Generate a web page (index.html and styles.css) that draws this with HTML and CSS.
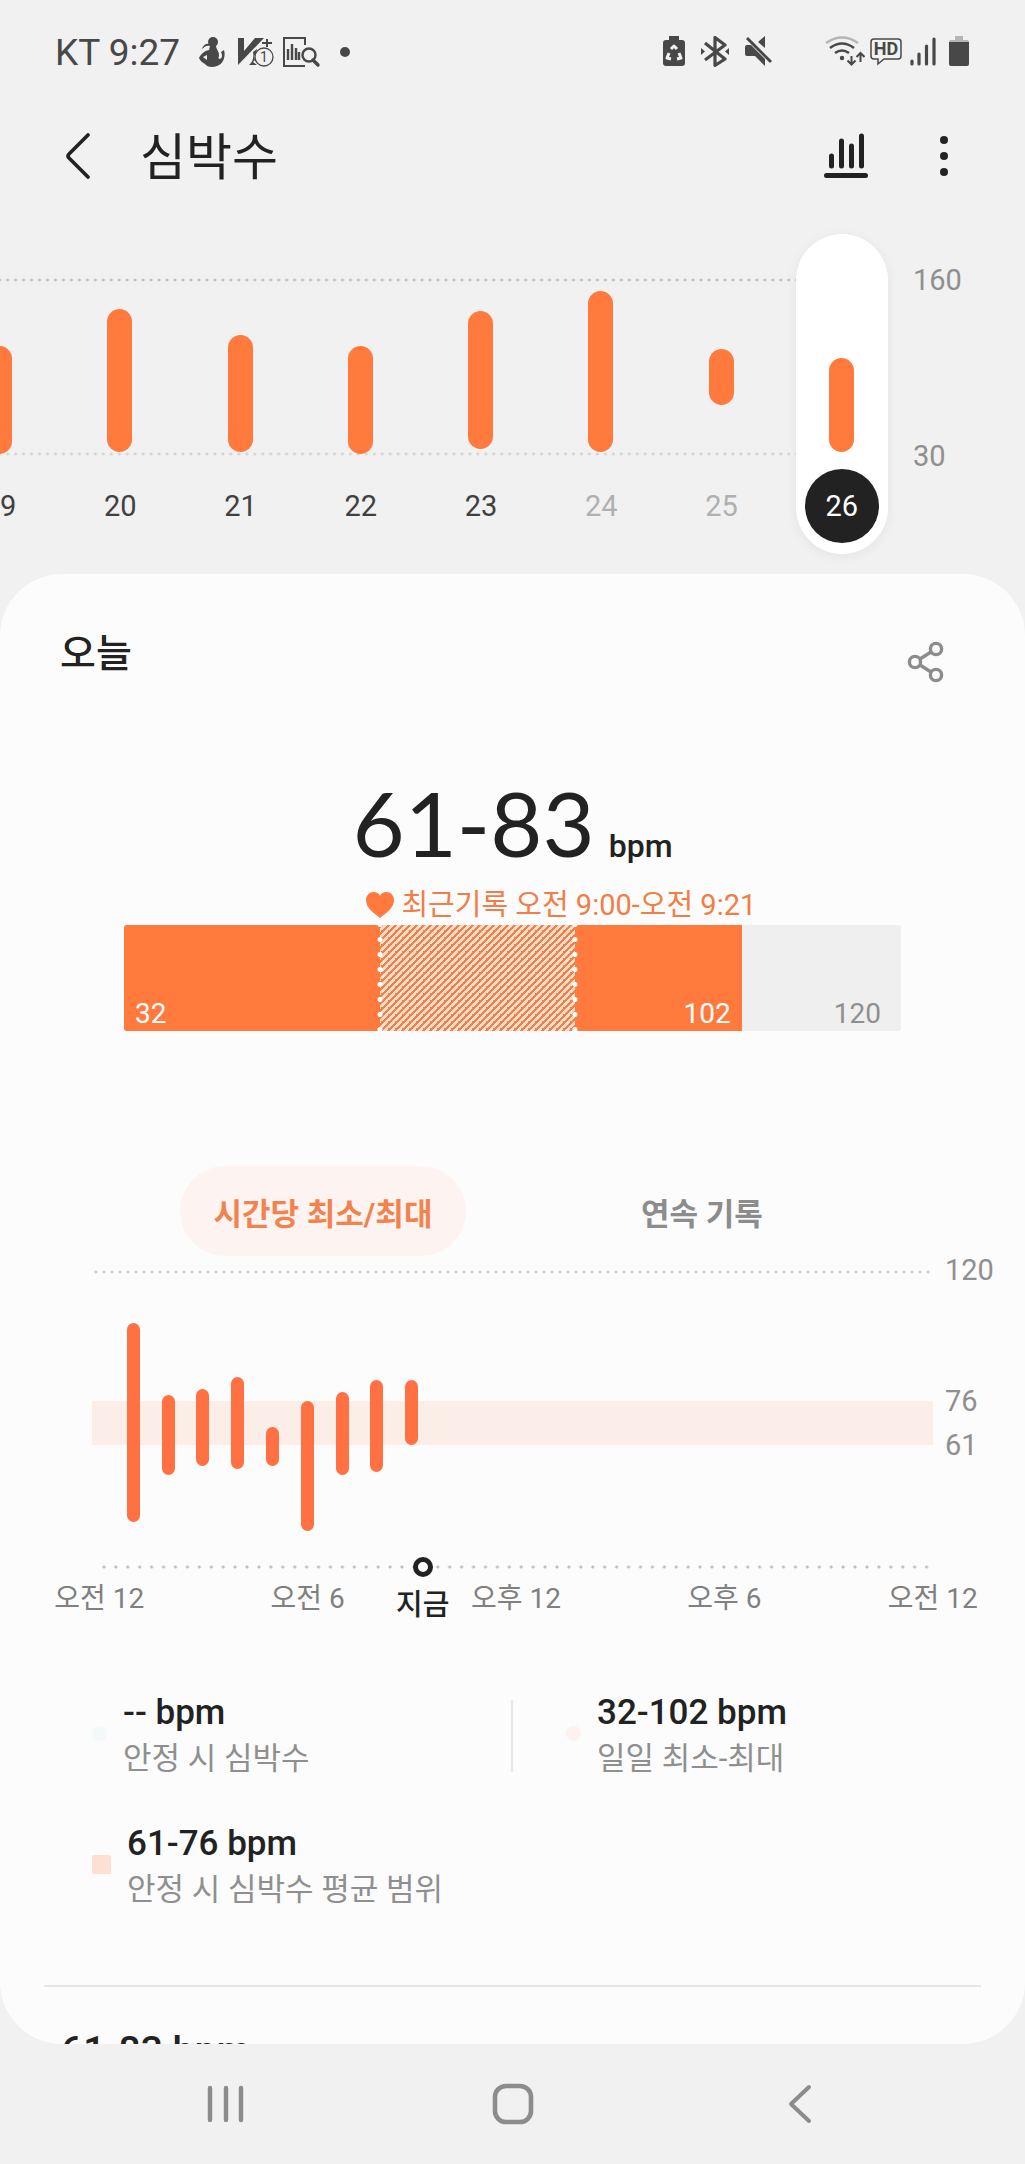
FILE: index.html
```html
<!DOCTYPE html>
<html lang="ko">
  <head>
    <meta charset="utf-8" />
    <title>심박수</title>
    <meta name="viewport" content="width=device-width, initial-scale=1.0" />
    <link rel="stylesheet" href="styles.css">
  </head>
  <body>
    <div class="statusbar">
      <span class="clock">KT 9:27</span>
      <div class="notices">
        <svg width="36" height="32" viewBox="0 0 36 32" fill="#484848">
          <circle cx="19" cy="6" r="5" />
          <path d="M8 13c1-4 4-6 8-5l1 2c-4-1-6 0-9 3z" />
          <path d="M16 10h6c0 3 3 5 3 9 0 2-1 3 0 4 3 0 4-3 2-7l3-2c2 7-1 14-7 16-5 2-10 1-12-2-2-1-5-3-6-6 2-4 5-7 10-8zM9 21l4 3v-5z" fill-rule="evenodd" />
        </svg>
        <svg width="40" height="32" viewBox="0 0 40 32">
          <path d="M2 2h6v13L19 2h9L2 29z" fill="#484848" />
          <path d="M17 16l4-3-1 5-2 2 1 4-2 2 4 3h-8c4-3 5-8 4-13z" fill="#484848" />
          <path d="M26 7h10M31 3v8" stroke="#484848" stroke-width="2" />
          <circle cx="28" cy="21" r="9" fill="#f1f1f1" stroke="#484848" stroke-width="1.3" />
          <text class="badge-number" x="28" y="26" text-anchor="middle">1</text>
        </svg>
        <svg width="40" height="32" viewBox="0 0 40 32" fill="none" stroke="#484848" stroke-width="2">
          <path d="M23 9V2H2v28h21" />
          <path d="M6 24V13M10 24V8M14 24V12M17 24v-8" stroke-width="2.4" />
          <circle cx="27" cy="19" r="6.5" stroke-width="2.4" />
          <path d="M31 24l5 5" stroke-width="3.4" stroke-linecap="round" />
        </svg>
        <span class="more-dot"></span>
      </div>
      <div class="phone-state">
        <svg width="22" height="32" viewBox="0 0 22 32">
          <path d="M6 0h10v4h3q3 0 3 3v20q0 3-3 3H3q-3 0-3-3V7q0-3 3-3h3z" fill="#484848" />
          <path d="M8 13l3-3 3 3M6 17l-2 5 4 1M16 17l2 5-4 1" stroke="#f1f1f1" stroke-width="3" fill="none" stroke-linejoin="round" />
        </svg>
        <svg width="28" height="32" viewBox="0 0 28 32" fill="none" stroke="#484848" stroke-width="3.2">
          <path d="M4 7l20 16-10 6.500V1.500L24 9 4 24" stroke-linejoin="round" />
          <path d="M0 12l4 3.500-4 3.500zM28 12l-4 3.500 4 3.500z" fill="#484848" stroke="none" />
        </svg>
        <svg width="28" height="32" viewBox="0 0 28 32">
          <path d="M0 11q0-2 2-2h4l14 14v7L10 20H2q-2 0-2-2zM13 6l7-6v12z" fill="#484848" />
          <path d="M2 2l24 24" stroke="#484848" stroke-width="3" />
        </svg>
      </div>
      <div class="network">
        <svg width="40" height="32" viewBox="0 0 40 32" fill="none" stroke="#484848" stroke-width="2.6">
          <path d="M1 7q16-11 32 0" stroke="#b5b5b5" />
          <path d="M5 12q12-9 24 0M10 17q7-5 14 0" />
          <circle cx="17" cy="22" r="2.200" fill="#484848" stroke="none" />
          <path d="M26.500 20v8M22.500 24.500l4 4 4-4M35.500 26v-9M31.500 21l4-4 4 4" stroke-width="2" />
        </svg>
        <svg width="36" height="32" viewBox="0 0 36 32">
          <path d="M5 3h24q3 0 3 3v14q0 3-3 3H15l-6 5v-5H5q-3 0-3-3V6q0-3 3-3z" fill="none" stroke="#484848" stroke-width="1.500" />
          <text class="hd-text" x="17" y="19" text-anchor="middle">HD</text>
        </svg>
        <svg width="36" height="32" viewBox="0 0 36 32" stroke="#484848" stroke-width="3.200" stroke-linecap="round">
          <path d="M3 25v3M10 18v10M17.500 10v18M25 3v25" />
        </svg>
        <svg width="20" height="32" viewBox="0 0 20 32">
          <path d="M0 8V6q0-2 2-2h4V0h8v4h4q2 0 2 2v2z" fill="#b5b5b5" />
          <path d="M0 6h20v22q0 2-2 2H2q-2 0-2-2z" fill="#484848" />
        </svg>
      </div>
    </div>

    <header class="topbar">
      <button class="icon-button" type="button" aria-label="뒤로">
        <svg width="26" height="48" viewBox="0 0 26 48" fill="none" stroke="#222" stroke-width="3.600" stroke-linecap="round" stroke-linejoin="round">
          <path d="M23 3L4 22q-2 2 0 4l19 19" />
        </svg>
      </button>
      <h1>심박수</h1>
      <button class="icon-button trend" type="button" aria-label="추세">
        <svg width="46" height="48" viewBox="0 0 46 48" stroke="#222" stroke-width="5" stroke-linecap="round">
          <path d="M8.500 24v10M18.500 9v25M28.500 14v20M38.500 4v30M3.500 43.500h39" />
        </svg>
      </button>
      <button class="icon-button" type="button" aria-label="더보기">
        <svg width="10" height="48" viewBox="0 0 10 48" fill="#222">
          <circle cx="5" cy="8" r="4" />
          <circle cx="5" cy="24" r="4" />
          <circle cx="5" cy="40" r="4" />
        </svg>
      </button>
    </header>

    <section class="week">
      <div class="week-plot">
        <div class="week-lines"></div>
        <div class="days">
          <button class="day" type="button"><span class="day-plot"><span class="day-bar" style="top: 38%; height: 62%"></span></span><span class="day-name">19</span></button>
          <button class="day" type="button"><span class="day-plot"><span class="day-bar" style="top: 17%; height: 82%"></span></span><span class="day-name">20</span></button>
          <button class="day" type="button"><span class="day-plot"><span class="day-bar" style="top: 32%; height: 67%"></span></span><span class="day-name">21</span></button>
          <button class="day" type="button"><span class="day-plot"><span class="day-bar" style="top: 38%; height: 62%"></span></span><span class="day-name">22</span></button>
          <button class="day" type="button"><span class="day-plot"><span class="day-bar" style="top: 18%; height: 79%"></span></span><span class="day-name">23</span></button>
          <button class="day weekend" type="button"><span class="day-plot"><span class="day-bar" style="top: 7%; height: 92%"></span></span><span class="day-name">24</span></button>
          <button class="day weekend" type="button"><span class="day-plot"><span class="day-bar" style="top: 40%; height: 32%"></span></span><span class="day-name">25</span></button>
          <button class="day selected" type="button"><span class="day-plot"><span class="day-bar" style="top: 45%; height: 54%"></span></span><span class="day-name">26</span></button>
        </div>
      </div>
      <div class="week-scale">
        <span>160</span>
        <span>30</span>
      </div>
    </section>

    <main class="card">
      <div class="card-head">
        <h2>오늘</h2>
        <button class="icon-button" type="button" aria-label="공유">
          <svg width="38" height="42" viewBox="0 0 38 42" fill="none" stroke="#8c8c8c" stroke-width="3.400">
            <circle cx="8" cy="21" r="5.600" />
            <circle cx="29" cy="8" r="5.600" />
            <circle cx="29" cy="34" r="5.600" />
            <path d="M13 18l11-7M13 24l11 7" />
          </svg>
        </button>
      </div>

      <p class="reading"><span class="reading-value">61-83</span><span class="reading-unit">bpm</span></p>

      <div class="range">
        <p class="recent">
          <svg width="28" height="26" viewBox="0 0 28 26" fill="#ff7a3c">
            <path d="M14 26C8 21 0 16 0 8c0-4.500 3.500-8 7.500-8C10.500 0 13 1.500 14 4c1-2.500 3.500-4 6.500-4C24.500 0 28 3.500 28 8c0 8-8 13-14 18z" />
          </svg>
          최근기록 오전 9:00-오전 9:21
        </p>
        <div class="range-bar">
          <span class="segment" style="width: 33%">32</span>
          <span class="segment hatched" style="width: 25%"></span>
          <span class="segment upper" style="width: 21.5%">102</span>
          <span class="segment rest" style="width: 20.5%">120</span>
        </div>
      </div>

      <div class="tabs">
        <button class="tab active" type="button">시간당 최소/최대</button>
        <button class="tab" type="button">연속 기록</button>
      </div>

      <section class="hourly">
        <div class="hour-plot">
          <div class="average" style="top: 44%; height: 15%"></div>
          <div class="hours">
            <span class="hour-bar" style="top: 18%; height: 67%"></span>
            <span class="hour-bar" style="top: 42%; height: 27%"></span>
            <span class="hour-bar" style="top: 40%; height: 26%"></span>
            <span class="hour-bar" style="top: 36%; height: 31%"></span>
            <span class="hour-bar" style="top: 53%; height: 13%"></span>
            <span class="hour-bar" style="top: 44%; height: 44%"></span>
            <span class="hour-bar" style="top: 41%; height: 28%"></span>
            <span class="hour-bar" style="top: 37%; height: 31%"></span>
            <span class="hour-bar" style="top: 37%; height: 22%"></span>
          </div>
          <div class="baseline">
            <div class="now" style="left: 39%"><span class="now-dot"></span>지금</div>
          </div>
        </div>
        <div class="hour-scale">
          <span style="top: 0%">120</span>
          <span style="top: 44%">76</span>
          <span style="top: 59%">61</span>
        </div>
      </section>
      <div class="hour-names">
        <span>오전 12</span>
        <span>오전 6</span>
        <span>오후 12</span>
        <span>오후 6</span>
        <span>오전 12</span>
      </div>

      <div class="legend">
        <div class="legend-item">
          <span class="dot resting"></span>
          <p><strong>-- bpm</strong>안정 시 심박수</p>
        </div>
        <div class="legend-item second">
          <span class="dot daily"></span>
          <p><strong>32-102 bpm</strong>일일 최소-최대</p>
        </div>
        <div class="legend-item">
          <span class="square"></span>
          <p><strong>61-76 bpm</strong>안정 시 심박수 평균 범위</p>
        </div>
      </div>

      <div class="record">61-83 bpm</div>
    </main>

    <nav class="navbar">
      <button class="icon-button" type="button" aria-label="최근 앱">
        <svg width="40" height="42" viewBox="0 0 40 42" stroke="#8c8c8c" stroke-width="4.400" stroke-linecap="round">
          <path d="M4 5v32M20 5v32M35 5v32" />
        </svg>
      </button>
      <button class="icon-button" type="button" aria-label="홈">
        <svg width="42" height="42" viewBox="0 0 42 42" fill="none" stroke="#8c8c8c" stroke-width="4.600">
          <rect x="3" y="3" width="36" height="36" rx="11" />
        </svg>
      </button>
      <button class="icon-button" type="button" aria-label="이전">
        <svg width="42" height="42" viewBox="0 0 42 42" fill="none" stroke="#8c8c8c" stroke-width="4" stroke-linecap="round" stroke-linejoin="round">
          <path d="M30 4L12 21l18 17" />
        </svg>
      </button>
    </nav>
  </body>
</html>
```

FILE: styles.css
```css
* {
  box-sizing: border-box;
}
body {
  margin: 0;
  height: 100vh;
  display: flex;
  flex-direction: column;
  overflow: hidden;
  background-color: #f1f1f1;
  color: #222;
  font-family: Roboto, "Noto Sans CJK KR", sans-serif;
}
h1,
h2,
p {
  margin: 0;
}
button {
  border: 0;
  padding: 0;
  background: none;
  color: inherit;
  font-family: inherit;
  cursor: pointer;
}
svg {
  display: block;
}
.icon-button {
  display: flex;
}

/* status bar */
.statusbar {
  height: 104px;
  flex-shrink: 0;
  display: flex;
  align-items: center;
  padding: 0 56px 0 55px;
  color: #484848;
}
.clock {
  font-size: 37px;
}
.notices {
  display: flex;
  align-items: center;
  gap: 6px;
  margin-left: 14px;
  margin-right: auto;
}
.more-dot {
  width: 10px;
  height: 10px;
  margin-left: 12px;
  border-radius: 50%;
  background-color: #484848;
}
.badge-number {
  font-size: 14px;
  fill: #484848;
}
.phone-state {
  display: flex;
  gap: 16px;
  margin-right: 52px;
}
.network {
  display: flex;
  gap: 4px;
}
.hd-text {
  font-size: 18px;
  font-weight: 700;
  fill: #484848;
}

/* title row */
.topbar {
  height: 104px;
  flex-shrink: 0;
  display: flex;
  align-items: center;
  padding: 0 76px 0 65px;
}
.topbar h1 {
  margin-left: 49px;
  padding-top: 4px;
  font-size: 50px;
  line-height: 56px;
  font-weight: 400;
}
.trend {
  margin-left: auto;
  margin-right: 70px;
}

/* week chart */
.week {
  flex-shrink: 0;
  display: flex;
  margin: 26px 0 20px -60px;
}
.week-plot {
  flex: 1;
  display: grid;
}
.week-lines,
.days {
  grid-area: 1 / 1;
}
.week-lines {
  margin: 44px 60px 98px 0;
  background-image: radial-gradient(circle, #c0c0c0 1px, transparent 2px),
    radial-gradient(circle, #d4d4d4 1px, transparent 2px);
  background-size: 8px 4px;
  background-position: left top, left bottom;
  background-repeat: round no-repeat;
}
.days {
  display: grid;
  grid-template-columns: repeat(8, 1fr);
  justify-items: center;
}
.day {
  width: 92px;
  padding: 45px 9px 11px;
  border-radius: 46px;
}
.day-plot {
  display: block;
  position: relative;
  height: 175px;
}
.day-bar {
  position: absolute;
  left: calc(50% - 13px);
  width: 25px;
  border-radius: 13px;
  background-color: #ff7a3c;
}
.day-name {
  display: block;
  margin-top: 15px;
  border-radius: 50%;
  font-size: 29px;
  line-height: 74px;
  color: #404040;
}
.weekend .day-name {
  color: #b0b0b0;
}
.selected {
  background-color: #fff;
  box-shadow: 0 2px 12px rgba(0, 0, 0, 0.06);
}
.selected .day-name {
  background-color: #222;
  color: #fff;
}
.week-scale {
  width: 123px;
  padding: 29px 0 81px 11px;
  display: flex;
  flex-direction: column;
  justify-content: space-between;
  font-size: 29px;
  line-height: 34px;
  color: #8f8f8f;
}

/* today card */
.card {
  flex: 1;
  min-height: 0;
  overflow: hidden;
  border-radius: 62px;
  background-color: #fcfcfc;
}
.card-head {
  display: flex;
  align-items: center;
  justify-content: space-between;
  padding: 51px 80px 0 60px;
}
.card-head h2 {
  font-size: 39px;
  line-height: 48px;
  font-weight: 500;
}
.card-head .icon-button {
  margin-top: 16px;
}
.reading {
  display: flex;
  justify-content: center;
  align-items: baseline;
  gap: 14px;
  margin-top: 100px;
  line-height: 78px;
}
.reading-value {
  font-family: Lato, Roboto, sans-serif;
  font-size: 90px;
}
.reading-unit {
  font-size: 32px;
  font-weight: 500;
}
.range {
  padding: 0 12.1%;
}
.recent {
  display: flex;
  align-items: center;
  gap: 7px;
  padding-left: calc(33% - 14px);
  font-size: 29px;
  line-height: 40px;
  color: #f27d47;
  white-space: nowrap;
}
.range-bar {
  display: flex;
  height: 106px;
  border-radius: 3px;
  overflow: hidden;
  font-size: 28px;
  line-height: 34px;
}
.segment {
  display: flex;
  align-items: flex-end;
  padding: 0 11px;
  background-color: #ff7a3c;
  color: #fff;
}
.hatched {
  position: relative;
  z-index: 1;
  background-image: linear-gradient(135deg, #ee8150 25%, #fbdcc4 25% 50%, #ee8150 50% 75%, #fbdcc4 75%);
  background-size: 7px 7px;
}
.hatched::before,
.hatched::after {
  content: "";
  position: absolute;
  top: -8px;
  bottom: -6px;
  width: 6px;
  background-image: radial-gradient(circle, #fff 2px, transparent 3px);
  background-size: 6px 15px;
}
.hatched::before {
  left: -3px;
}
.hatched::after {
  right: -3px;
}
.upper,
.rest {
  justify-content: flex-end;
}
.rest {
  padding-right: 20px;
  background-color: #efefef;
  color: #8f8f8f;
}

/* tabs */
.tabs {
  display: flex;
  justify-content: center;
  gap: 93px;
  margin-top: 135px;
}
.tab {
  width: 286px;
  height: 90px;
  border-radius: 45px;
  font-size: 31px;
  font-weight: 700;
  color: #8c8c8c;
}
.tab.active {
  background-color: #fdf4f1;
  color: #f2834f;
}

/* hourly chart */
.hourly {
  display: flex;
  height: 297px;
  margin: 14px 0 0 92px;
}
.hour-plot {
  flex: 1;
  position: relative;
  padding-left: 6px;
  background-image: radial-gradient(circle, #d0d0d0 1px, transparent 2px);
  background-size: 8px 4px;
  background-repeat: round no-repeat;
}
.average {
  position: absolute;
  left: 0;
  right: 0;
  background-color: #fbede7;
}
.hours {
  height: 100%;
  display: grid;
  grid-template-columns: repeat(24, 1fr);
  justify-items: end;
}
.hour-bar {
  position: relative;
  width: 13px;
  margin-right: -7px;
  border-radius: 7px;
  background-color: #ff7043;
}
.baseline {
  position: relative;
  height: 4px;
  margin-top: -2px;
  background-image: radial-gradient(circle, #bdbdbd 1px, transparent 2px);
  background-size: 12px 4px;
  background-repeat: round no-repeat;
}
.now {
  position: absolute;
  top: -8px;
  width: 60px;
  margin-left: -31px;
  display: flex;
  flex-direction: column;
  align-items: center;
  gap: 8px;
  font-size: 29px;
  line-height: 40px;
  font-weight: 500;
}
.now-dot {
  width: 20px;
  height: 20px;
  border: 5px solid #222;
  border-radius: 50%;
  background-color: #fff;
}
.hour-scale {
  position: relative;
  width: 92px;
  font-size: 29px;
  line-height: 34px;
  color: #8f8f8f;
}
.hour-scale span {
  position: absolute;
  left: 12px;
  margin-top: -17px;
}
.hour-names {
  display: grid;
  grid-template-columns: repeat(5, 1fr);
  margin: 12px -12px 0 -5px;
  font-size: 28px;
  line-height: 40px;
  text-align: center;
  color: #808080;
}

/* legend */
.legend {
  display: grid;
  grid-template-columns: 419px 1fr;
  row-gap: 39px;
  align-items: center;
  padding: 71px 0 72px 92px;
}
.legend-item {
  display: flex;
  align-items: center;
  gap: 16px;
  font-size: 31px;
  line-height: 46px;
  color: #8f8f8f;
}
.legend-item strong {
  display: block;
  font-size: 35px;
  font-weight: 500;
  color: #222;
}
.second {
  height: 72px;
  padding-left: 53px;
  border-left: 2px solid #e8e8e8;
}
.dot,
.square {
  margin-bottom: 6px;
}
.dot {
  width: 15px;
  height: 15px;
  border-radius: 50%;
}
.resting {
  background-color: #f1faf9;
}
.daily {
  background-color: #fef2ee;
}
.square {
  width: 19px;
  height: 19px;
  border-radius: 2px;
  background-color: #fddfd3;
}
.record {
  margin: 0 44px;
  padding: 41px 17px;
  border-top: 2px solid #e6e6e6;
  font-size: 39px;
  line-height: 46px;
  font-weight: 500;
}

/* system buttons */
.navbar {
  height: 120px;
  flex-shrink: 0;
  display: grid;
  grid-template-columns: repeat(3, 28%);
  justify-content: center;
  justify-items: center;
  align-items: center;
}
```
